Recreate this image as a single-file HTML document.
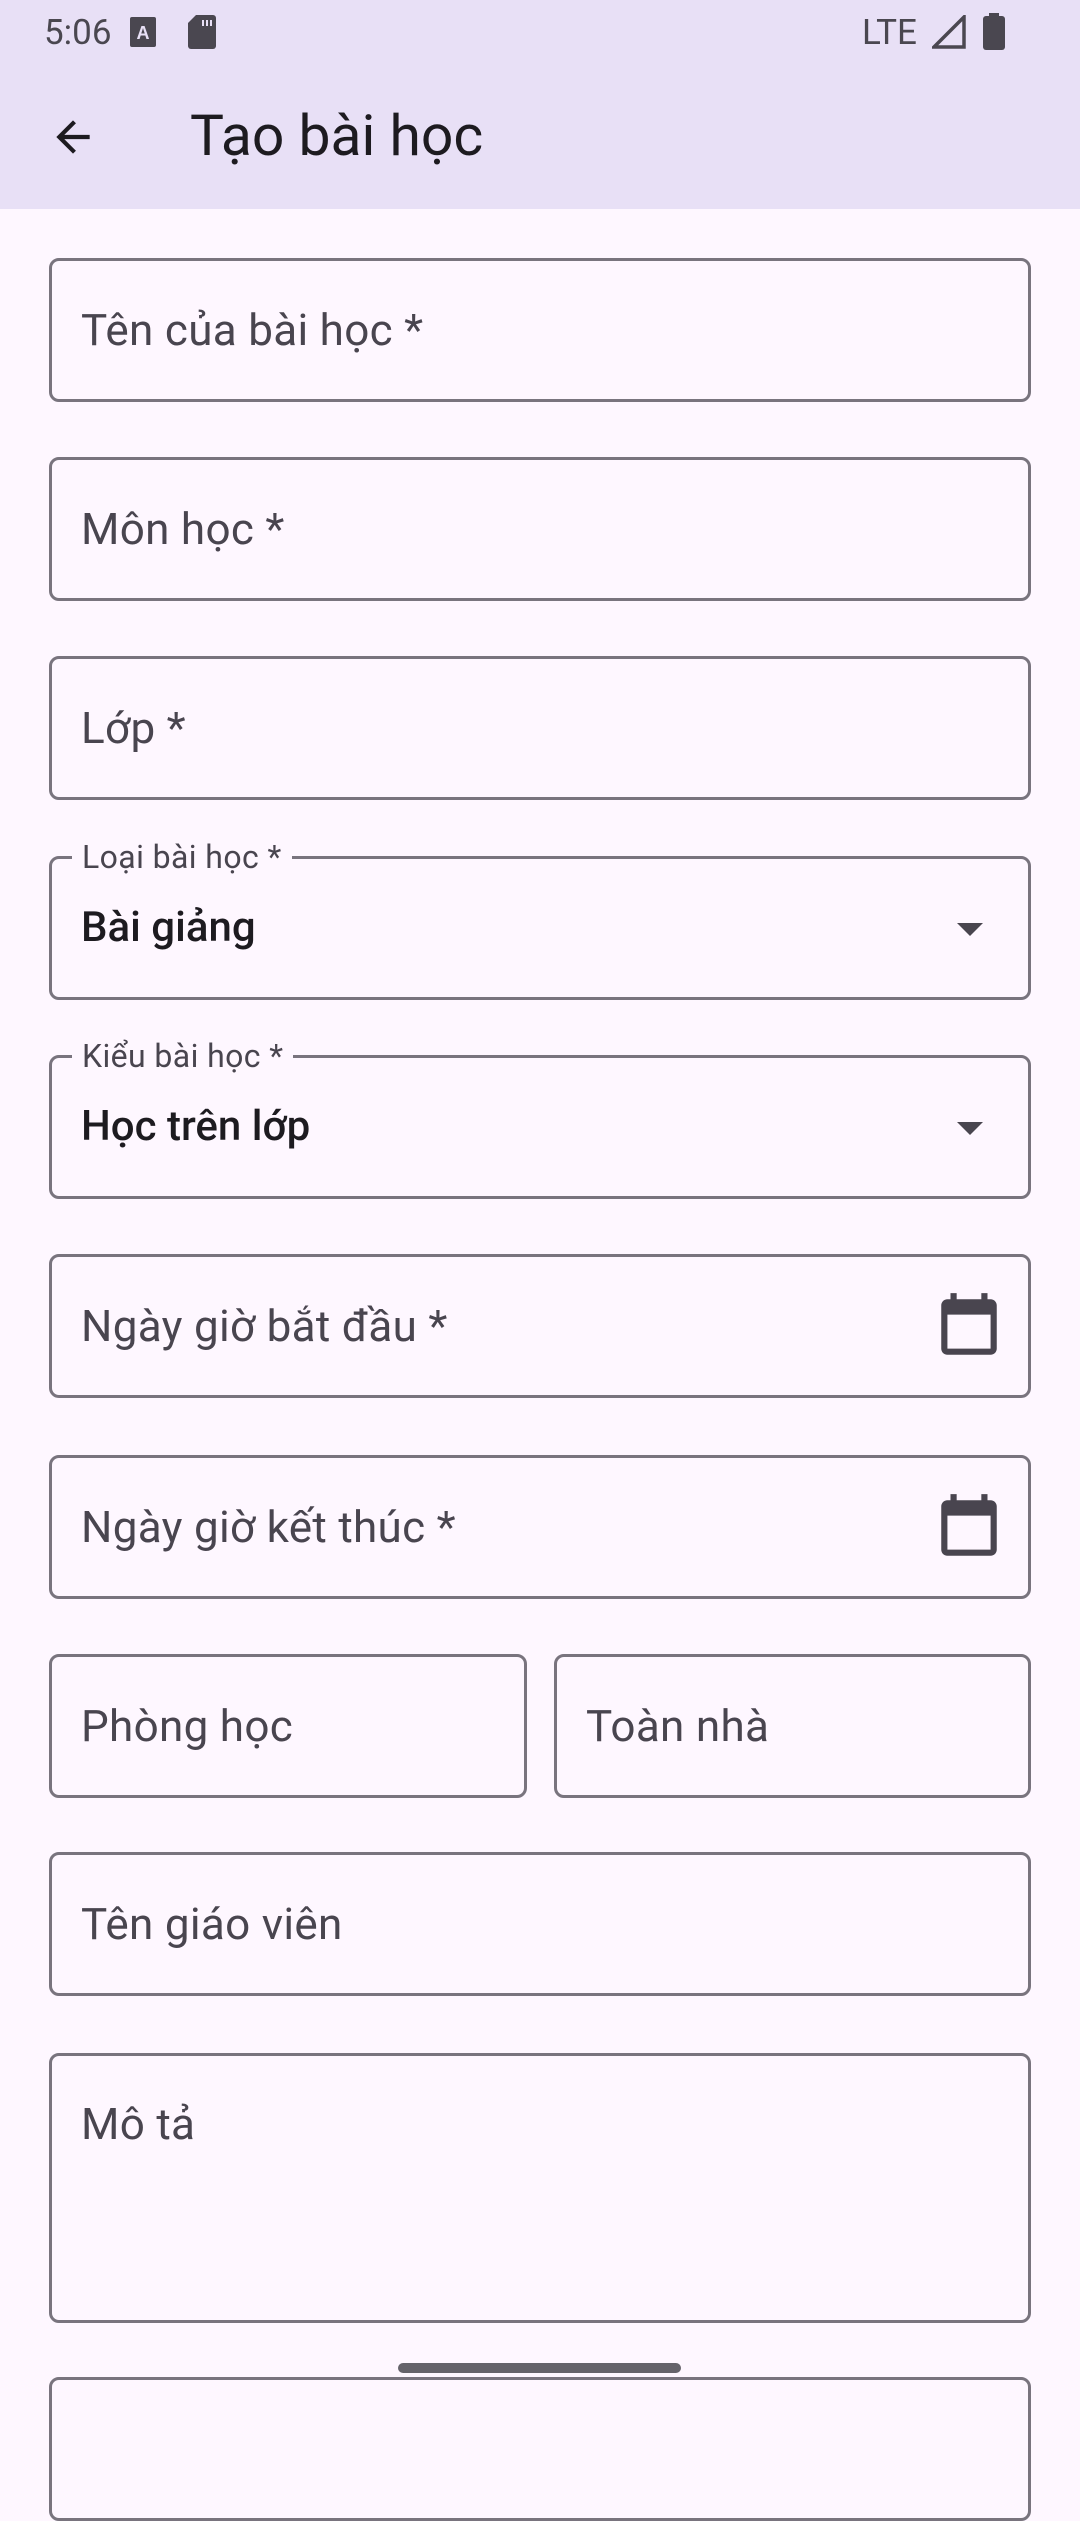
<!DOCTYPE html>
<html><head><meta charset="utf-8"><style>
*{margin:0;padding:0;box-sizing:border-box}
body{width:1080px;height:2400px;background:#FEF7FF;font-family:"Roboto","Liberation Sans",sans-serif;position:relative;overflow:hidden}
.bar{position:absolute;left:0;top:0;width:1080px;height:209px;background:#E8E0F6}
.st{position:absolute;top:12px;font-size:35px;color:#4a4750}
.title{position:absolute;left:190px;top:100px;font-size:57px;color:#1D1B20;line-height:72px}
.f{position:absolute;left:49px;width:982px;height:144px;border:3px solid #79747E;border-radius:10px}
.ph{position:absolute;left:29px;top:0;line-height:138px;font-size:44px;color:#49454F;letter-spacing:0.3px}
.val{position:absolute;left:29px;top:0;line-height:138px;font-size:42px;color:#1D1B20;font-weight:500}
.lab{position:absolute;left:20px;top:-21px;padding:0 10px;background:#FEF7FF;font-size:32px;line-height:38px;color:#49454F;letter-spacing:0.4px}
.arr{position:absolute;right:45px;top:64px;width:0;height:0;border-left:13px solid transparent;border-right:13px solid transparent;border-top:13px solid #49454F}
.cal{position:absolute;right:22px;top:33px}
</style></head><body>
<div class="bar">
  <div class="st" style="left:44px">5:06</div>
  <svg style="position:absolute;left:130px;top:17px" width="26" height="30"><rect x="0" y="0" width="26" height="30" rx="2" fill="#4a4750"/><text x="13" y="22" font-size="18" font-family="Liberation Sans" fill="#E8E0F6" text-anchor="middle" font-weight="bold">A</text></svg>
  <svg style="position:absolute;left:188px;top:15px" width="28" height="34"><path d="M8 0H25a3 3 0 0 1 3 3V31a3 3 0 0 1-3 3H3a3 3 0 0 1-3-3V8Z" fill="#4a4750"/><rect x="14" y="5" width="2" height="6" fill="#E8E0F6"/><rect x="18" y="5" width="2" height="6" fill="#E8E0F6"/><rect x="22" y="5" width="2" height="6" fill="#E8E0F6"/></svg>
  <div class="st" style="left:862px">LTE</div>
  <svg style="position:absolute;left:932px;top:15px" width="34" height="34"><path d="M32 2V32H2Z" fill="none" stroke="#4a4750" stroke-width="3.5"/></svg>
  <svg style="position:absolute;left:983px;top:13px" width="22" height="37"><rect x="6" y="0" width="10" height="5" fill="#4a4750"/><rect x="0" y="3" width="22" height="34" rx="3" fill="#4a4750"/></svg>
  <svg style="position:absolute;left:48px;top:112px" width="50" height="50" viewBox="0 0 24 24"><path d="M20 11H7.83l5.59-5.59L12 4l-8 8 8 8 1.41-1.41L7.83 13H20v-2z" fill="#1D1B20"/></svg>
  <div class="title">Tạo bài học</div>
</div>

<div class="f" style="top:258px"><div class="ph">Tên của bài học *</div></div>
<div class="f" style="top:457px"><div class="ph">Môn học *</div></div>
<div class="f" style="top:656px"><div class="ph">Lớp *</div></div>
<div class="f" style="top:856px"><div class="lab">Loại bài học *</div><div class="val">Bài giảng</div><div class="arr"></div></div>
<div class="f" style="top:1055px"><div class="lab">Kiểu bài học *</div><div class="val">Học trên lớp</div><div class="arr"></div></div>
<div class="f" style="top:1254px"><div class="ph">Ngày giờ bắt đầu *</div>
  <svg class="cal" width="74" height="74" viewBox="0 0 24 24"><path d="M19 3h-1V1h-2v2H8V1H6v2H5c-1.1 0-2 .9-2 2v14c0 1.1.9 2 2 2h14c1.1 0 2-.9 2-2V5c0-1.1-.9-2-2-2zm0 16H5V8h14v11z" fill="#49454F"/></svg></div>
<div class="f" style="top:1455px"><div class="ph">Ngày giờ kết thúc *</div>
  <svg class="cal" width="74" height="74" viewBox="0 0 24 24"><path d="M19 3h-1V1h-2v2H8V1H6v2H5c-1.1 0-2 .9-2 2v14c0 1.1.9 2 2 2h14c1.1 0 2-.9 2-2V5c0-1.1-.9-2-2-2zm0 16H5V8h14v11z" fill="#49454F"/></svg></div>
<div class="f" style="top:1654px;width:478px"><div class="ph">Phòng học</div></div>
<div class="f" style="top:1654px;left:554px;width:477px"><div class="ph">Toàn nhà</div></div>
<div class="f" style="top:1852px"><div class="ph">Tên giáo viên</div></div>
<div class="f" style="top:2053px;height:270px"><div class="ph" style="line-height:50px;top:43px">Mô tả</div></div>
<div class="f" style="top:2377px"></div>
<div style="position:absolute;left:398px;top:2363px;width:283px;height:10px;border-radius:5px;background:#65636a"></div>
</body></html>
